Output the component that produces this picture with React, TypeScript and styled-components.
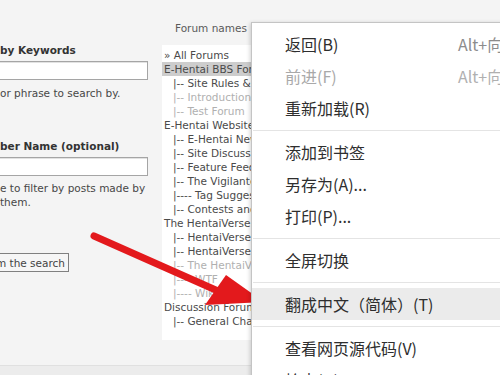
import React from "react";
import styled, { createGlobalStyle } from "styled-components";

const GlobalStyle = createGlobalStyle`
  html, body {
    margin: 0;
    padding: 0;
    background: #f3f3f3;
  }
  body {
    font-family: "DejaVu Sans", Verdana, sans-serif;
  }
`;

interface ForumRow {
  label: string;
  depth: number;
  muted?: boolean;
  selected?: boolean;
}

interface MenuEntry {
  label?: string;
  shortcut?: string;
  disabled?: boolean;
  active?: boolean;
  separator?: boolean;
}

const FORUMS: ForumRow[] = [
  { label: "\u00bb All Forums", depth: 0 },
  { label: "E-Hentai BBS Forums", depth: 0, selected: true },
  { label: "|-- Site Rules & Announcements", depth: 1 },
  { label: "|-- Introductions", depth: 1, muted: true },
  { label: "|-- Test Forum", depth: 1, muted: true },
  { label: "E-Hentai Website", depth: 0 },
  { label: "|-- E-Hentai News", depth: 1 },
  { label: "|-- Site Discussion", depth: 1 },
  { label: "|-- Feature Feedback", depth: 1 },
  { label: "|-- The Vigilante Corps", depth: 1 },
  { label: "|---- Tag Suggestions", depth: 1 },
  { label: "|-- Contests and Events", depth: 1 },
  { label: "The HentaiVerse", depth: 0 },
  { label: "|-- HentaiVerse Chat", depth: 1 },
  { label: "|-- HentaiVerse Bazaar", depth: 1 },
  { label: "|-- The HentaiVerse Archive", depth: 1, muted: true },
  { label: "|---- WTF", depth: 1, muted: true },
  { label: "|---- Wiki", depth: 1, muted: true },
  { label: "Discussion Forums", depth: 0 },
  { label: "|-- General Chat", depth: 1 },
];

const MENU: MenuEntry[] = [
  { label: "返回(B)", shortcut: "Alt+向左箭头" },
  { label: "前进(F)", shortcut: "Alt+向右箭头", disabled: true },
  { label: "重新加载(R)" },
  { separator: true },
  { label: "添加到书签" },
  { label: "另存为(A)..." },
  { label: "打印(P)..." },
  { separator: true },
  { label: "全屏切换" },
  { separator: true },
  { label: "翻成中文（简体）(T)", active: true },
  { separator: true },
  { label: "查看网页源代码(V)" },
  { label: "检查(N)" },
];

export default function App() {
  return (
    <Page>
      <GlobalStyle />
      <Main>
        <SearchColumn>
          <FieldLabel>by Keywords</FieldLabel>
          <TextInput type="text" />
          <Hint>or phrase to search by.</Hint>
          <FieldLabel $gap={39}>ber Name (optional)</FieldLabel>
          <TextInput type="text" />
          <Hint $gap={5}>
            e to filter by posts made by
            <br />
            them.
          </Hint>
          <ButtonRow>
            <SubmitButton>Perform the search</SubmitButton>
          </ButtonRow>
        </SearchColumn>
        <ForumColumn>
          <ColumnTitle>Forum names</ColumnTitle>
          <ForumList>
            {FORUMS.map((f) => (
              <ForumItem
                key={f.label}
                $depth={f.depth}
                $muted={!!f.muted}
                $selected={!!f.selected}
              >
                {f.label}
              </ForumItem>
            ))}
          </ForumList>
        </ForumColumn>
      </Main>
      <BottomBand />

      <Arrow viewBox="0 0 500 375" width="500" height="375">
        <line
          x1="94"
          y1="236"
          x2="218"
          y2="291"
          stroke="#e3191c"
          strokeWidth="7"
          strokeLinecap="round"
        />
        <polygon points="226,275 205,305 264,302" fill="#e3191c" />
      </Arrow>

      <ContextMenu>
        {MENU.map((m, i) =>
          m.separator ? (
            <MenuSeparator key={"sep" + i} />
          ) : (
            <MenuItem key={m.label} $active={!!m.active} $disabled={!!m.disabled}>
              <span>{m.label}</span>
              {m.shortcut && <Shortcut $disabled={!!m.disabled}>{m.shortcut}</Shortcut>}
            </MenuItem>
          )
        )}
      </ContextMenu>
    </Page>
  );
}

const Page = styled.div`
  position: relative;
  width: 500px;
  height: 375px;
  overflow: hidden;
  display: flex;
  flex-direction: column;
  background: #f4f4f4;
`;

const Main = styled.div`
  flex: 1;
  display: flex;
  min-height: 0;
`;

const SearchColumn = styled.div`
  width: 160px;
  padding-top: 43px;
  display: flex;
  flex-direction: column;
  overflow: hidden;
  font-size: 10.5px;
  line-height: 14px;
  color: #474747;
`;

const FieldLabel = styled.div<{ $gap?: number }>`
  margin-top: ${(p) => p.$gap ?? 0}px;
  font-weight: bold;
  color: #333;
  white-space: nowrap;
`;

const TextInput = styled.input`
  box-sizing: border-box;
  width: 151px;
  height: 19px;
  margin: 4px 0 0 -3px;
  border: 1px solid #a5a5a5;
  box-shadow: inset 1px 1px 0 #e2e2e2;
  background: #fff;
  outline: none;
`;

const Hint = styled.div<{ $gap?: number }>`
  margin-top: ${(p) => p.$gap ?? 6}px;
  white-space: nowrap;
`;

const ButtonRow = styled.div`
  width: 69px;
  margin-top: 44px;
  display: flex;
  justify-content: flex-end;
`;

const SubmitButton = styled.button`
  flex-shrink: 0;
  height: 19px;
  padding: 0 3px;
  border: 1px solid #808080;
  background: #f6f6f6;
  font-family: "DejaVu Sans", Verdana, sans-serif;
  font-size: 10.5px;
  color: #444;
  white-space: nowrap;
`;

const ForumColumn = styled.div`
  margin-left: 2px;
  padding-top: 21px;
  display: flex;
  flex-direction: column;
  font-size: 10.5px;
  line-height: 14px;
`;

const ColumnTitle = styled.div`
  padding-left: 13px;
  color: #5a5a5a;
  white-space: nowrap;
`;

const ForumList = styled.div`
  width: 110px;
  margin-top: 10px;
  padding: 3px 0 12px;
  background: #fff;
  overflow: hidden;
`;

const ForumItem = styled.div<{ $depth: number; $muted: boolean; $selected: boolean }>`
  height: 14px;
  padding-left: ${(p) => 2 + p.$depth * 9}px;
  white-space: nowrap;
  color: ${(p) => (p.$muted ? "#b0b0b0" : "#4a4a4a")};
  background: ${(p) => (p.$selected ? "#cdcdcd" : "transparent")};
`;

const BottomBand = styled.div`
  height: 9px;
  border-top: 1px solid #e0e0e0;
  background: #ececec;
`;

const Arrow = styled.svg`
  position: absolute;
  left: 0;
  top: 0;
  pointer-events: none;
  z-index: 1;
`;

const ContextMenu = styled.div`
  position: absolute;
  left: 251px;
  top: 22px;
  width: 280px;
  bottom: -40px;
  z-index: 2;
  padding-top: 5px;
  background: #fff;
  border: 1px solid #c4c4c4;
  box-shadow: -1px 1px 4px rgba(0, 0, 0, 0.18);
  font-family: "Noto Sans CJK SC", "Noto Sans", sans-serif;
  font-size: 16px;
`;

const MenuItem = styled.div<{ $active: boolean; $disabled: boolean }>`
  height: 32px;
  display: grid;
  grid-template-columns: 173px auto;
  align-items: center;
  padding-left: 33px;
  white-space: nowrap;
  color: ${(p) => (p.$disabled ? "#a9a9a9" : "#2e2e2e")};
  background: ${(p) => (p.$active ? "#ebebeb" : "transparent")};
`;

const Shortcut = styled.span<{ $disabled: boolean }>`
  color: ${(p) => (p.$disabled ? "#b0b0b0" : "#8c8c8c")};
`;

const MenuSeparator = styled.div`
  height: 1px;
  margin: 6px 0 5px 1px;
  background: #e4e4e4;
`;
